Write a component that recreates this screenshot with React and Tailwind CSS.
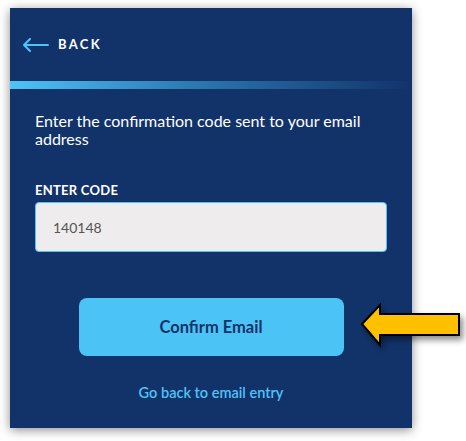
export default function App() {
  return (
    <div className="relative w-[466px] h-[441px] bg-white overflow-hidden" style={{ fontFamily: 'Lato, "Open Sans", sans-serif' }}>
      <div className="ml-[10px] mt-[8px] w-[402px] h-[420px] bg-[#12336a] shadow-[0_2px_10px_rgba(0,0,0,0.45)]">
        {/* header */}
        <div className="h-[73px] flex items-center pl-[12px] gap-[9px]">
          <svg width="27" height="14" viewBox="0 0 27 14" fill="none">
            <path d="M26 7H2M8 1L2 7l6 6" stroke="#4fc3f7" strokeWidth="2" strokeLinecap="round" strokeLinejoin="round" />
          </svg>
          <span className="text-[13px] font-bold tracking-[0.18em] text-white">BACK</span>
        </div>
        <div className="h-[8px] bg-gradient-to-r from-[#4fc3f7] via-[#2a72aa] to-[#12336a]" />

        <div className="px-[25px] pt-[23px] flex flex-col">
          <p className="text-[16px] leading-[18px] text-white">
            Enter the confirmation code sent to your email address
          </p>
          <label className="mt-[34px] text-[13px] leading-[16px] font-bold text-white tracking-[0.02em]">ENTER CODE</label>
          <div className="mt-[4px] h-[50px] rounded-[4px] border border-[#4fc3f7] bg-[#eeecec] flex items-center px-[17px] text-[14px] text-[#555]">
            140148
          </div>
          <div className="mt-[46px] flex justify-center">
            <button className="w-[265px] h-[58px] rounded-[8px] bg-[#4bc3f5] text-[16.5px] font-bold text-[#12336a]">
              Confirm Email
            </button>
          </div>
          <div className="mt-[27px] text-center text-[14.5px] leading-[20px] font-semibold text-[#4fc3f7]">
            Go back to email entry
          </div>
        </div>
      </div>

      {/* annotation arrow */}
      <svg className="absolute left-[360px] top-[302px]" width="106" height="54" viewBox="0 0 106 54">
        <defs>
          <filter id="sh" x="-20%" y="-30%" width="150%" height="180%">
            <feDropShadow dx="3" dy="4" stdDeviation="3" floodColor="#000" floodOpacity="0.45" />
          </filter>
        </defs>
        <polygon points="2,22 20,3 20,12 99,12 99,33 20,33 20,43" fill="#ffc000" stroke="#000" strokeWidth="2" strokeLinejoin="miter" filter="url(#sh)" />
      </svg>
    </div>
  );
}
